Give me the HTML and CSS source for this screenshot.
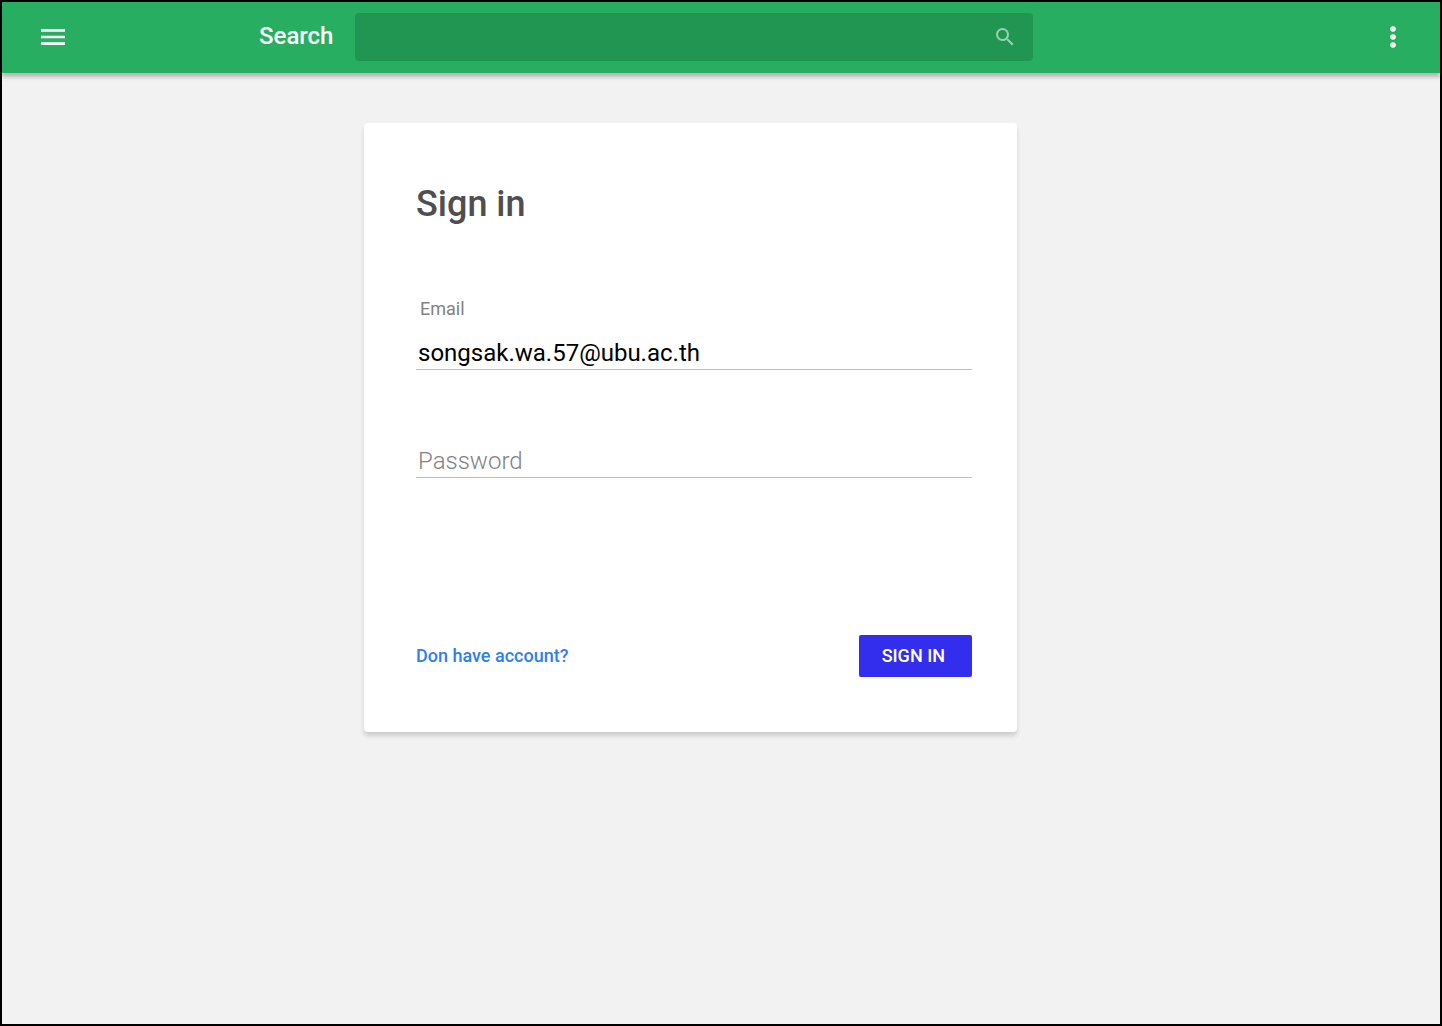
FILE: index.html
```html
<!DOCTYPE html>
<html lang="en">
<head>
<meta charset="utf-8">
<meta name="viewport" content="width=device-width, initial-scale=1">
<title>Sign in</title>
<link rel="stylesheet" href="styles.css">
</head>
<body>
<header class="app-bar">
  <button class="icon-button" type="button" aria-label="Menu">
    <svg width="24" height="16" viewBox="3 6 18 12"><path d="M3 18h18v-2H3v2zm0-5h18v-2H3v2zm0-7v2h18V6H3z" fill="#fff"/></svg>
  </button>
  <form class="search" role="search">
    <label class="search-label" for="search">Search</label>
    <div class="search-box">
      <input class="search-input" id="search" type="search">
      <button class="icon-button" type="submit" aria-label="Submit search">
        <svg width="24" height="24" viewBox="0 0 24 24"><path d="M15.500 14h-.79l-.28-.27A6.471 6.471 0 0 0 16 9.500 6.500 6.500 0 1 0 9.500 16c1.610 0 3.090-.59 4.230-1.570l.27.280v.79l5 4.990L20.490 19l-4.990-5zm-6 0C7.010 14 5 11.990 5 9.500S7.010 5 9.500 5 14 7.010 14 9.500 11.990 14 9.500 14z" fill="#9bd0b2"/></svg>
      </button>
    </div>
  </form>
  <button class="icon-button" type="button" aria-label="More options">
    <svg width="24" height="24" viewBox="0 0 24 24" fill="#fff"><circle cx="12" cy="4" r="2.800"/><circle cx="12" cy="12" r="2.800"/><circle cx="12" cy="20" r="2.800"/></svg>
  </button>
</header>
<main class="page">
  <form class="card">
    <h1 class="title">Sign in</h1>
    <div class="field">
      <label class="field-label" for="email">Email</label>
      <input class="field-input" id="email" type="email" value="songsak.wa.57@ubu.ac.th">
    </div>
    <div class="field field-password">
      <input class="field-input" type="password" placeholder="Password" aria-label="Password">
    </div>
    <div class="actions">
      <a class="link" href="#">Don have account?</a>
      <button class="submit" type="submit">SIGN IN</button>
    </div>
  </form>
</main>
</body>
</html>
```

FILE: styles.css
```css
* { box-sizing: border-box; }

body {
  display: flex;
  flex-direction: column;
  min-height: 100vh;
  margin: 0;
  border: 2px solid #000;
  background: #f2f2f2;
  font-family: Roboto, sans-serif;
}

button, input { font: inherit; }

.app-bar {
  display: flex;
  align-items: center;
  height: 71px;
  padding: 0 35px 1px 39px;
  background: #27ae60;
  box-shadow: 0 4px 4px rgba(0, 0, 0, 0.25);
}

.icon-button {
  display: flex;
  padding: 0;
  border: 0;
  background: none;
}

.search {
  display: flex;
  flex: 1;
  align-items: center;
  gap: 22px;
  margin: 0 348px 0 194px;
}

.search-label {
  padding-bottom: 2px;
  color: #fff;
  font-size: 24px;
  font-weight: 500;
  line-height: 28px;
}

.search-box {
  display: flex;
  flex: 1;
  align-items: center;
  height: 48px;
  padding-right: 16px;
  border-radius: 4px;
  background: #219653;
}

.search-input {
  flex: 1;
  min-width: 0;
  height: 100%;
  padding: 0 16px;
  border: 0;
  outline: 0;
  background: none;
  color: #fff;
  font-size: 20px;
}

.page {
  display: flex;
  justify-content: center;
  padding: 50px 61px 50px 0;
}

.card {
  width: 100%;
  max-width: 653px;
  padding: 60px 45px 55px 52px;
  border-radius: 4px;
  background: #fff;
  box-shadow: 0 4px 4px rgba(0, 0, 0, 0.15);
}

.title {
  margin: 0 0 74px;
  color: #4f4f4f;
  font-size: 36px;
  font-weight: 500;
  line-height: 42px;
}

.field {
  display: flex;
  flex-direction: column;
  gap: 18px;
}

.field-label {
  padding-left: 4px;
  color: #828282;
  font-size: 18px;
  line-height: 20px;
}

.field-input {
  width: 100%;
  height: 33px;
  padding: 0 2px;
  border: 0;
  border-bottom: 1px solid #bdbdbd;
  border-radius: 0;
  outline: 0;
  background: none;
  color: #000;
  font-size: 24px;
}

.field-input::placeholder {
  color: #828282;
  font-weight: 300;
  opacity: 1;
}

.field-password { margin-top: 75px; }

.actions {
  display: flex;
  align-items: center;
  justify-content: space-between;
  margin-top: 157px;
}

.link {
  color: #2f80ed;
  font-size: 18px;
  font-weight: 500;
  line-height: 20px;
  text-decoration: none;
}

.submit {
  height: 42px;
  padding: 0 27px 0 23px;
  border: 0;
  border-radius: 2px;
  background: #332eed;
  color: #fff;
  font-size: 18px;
  font-weight: 500;
  line-height: 20px;
}
```
